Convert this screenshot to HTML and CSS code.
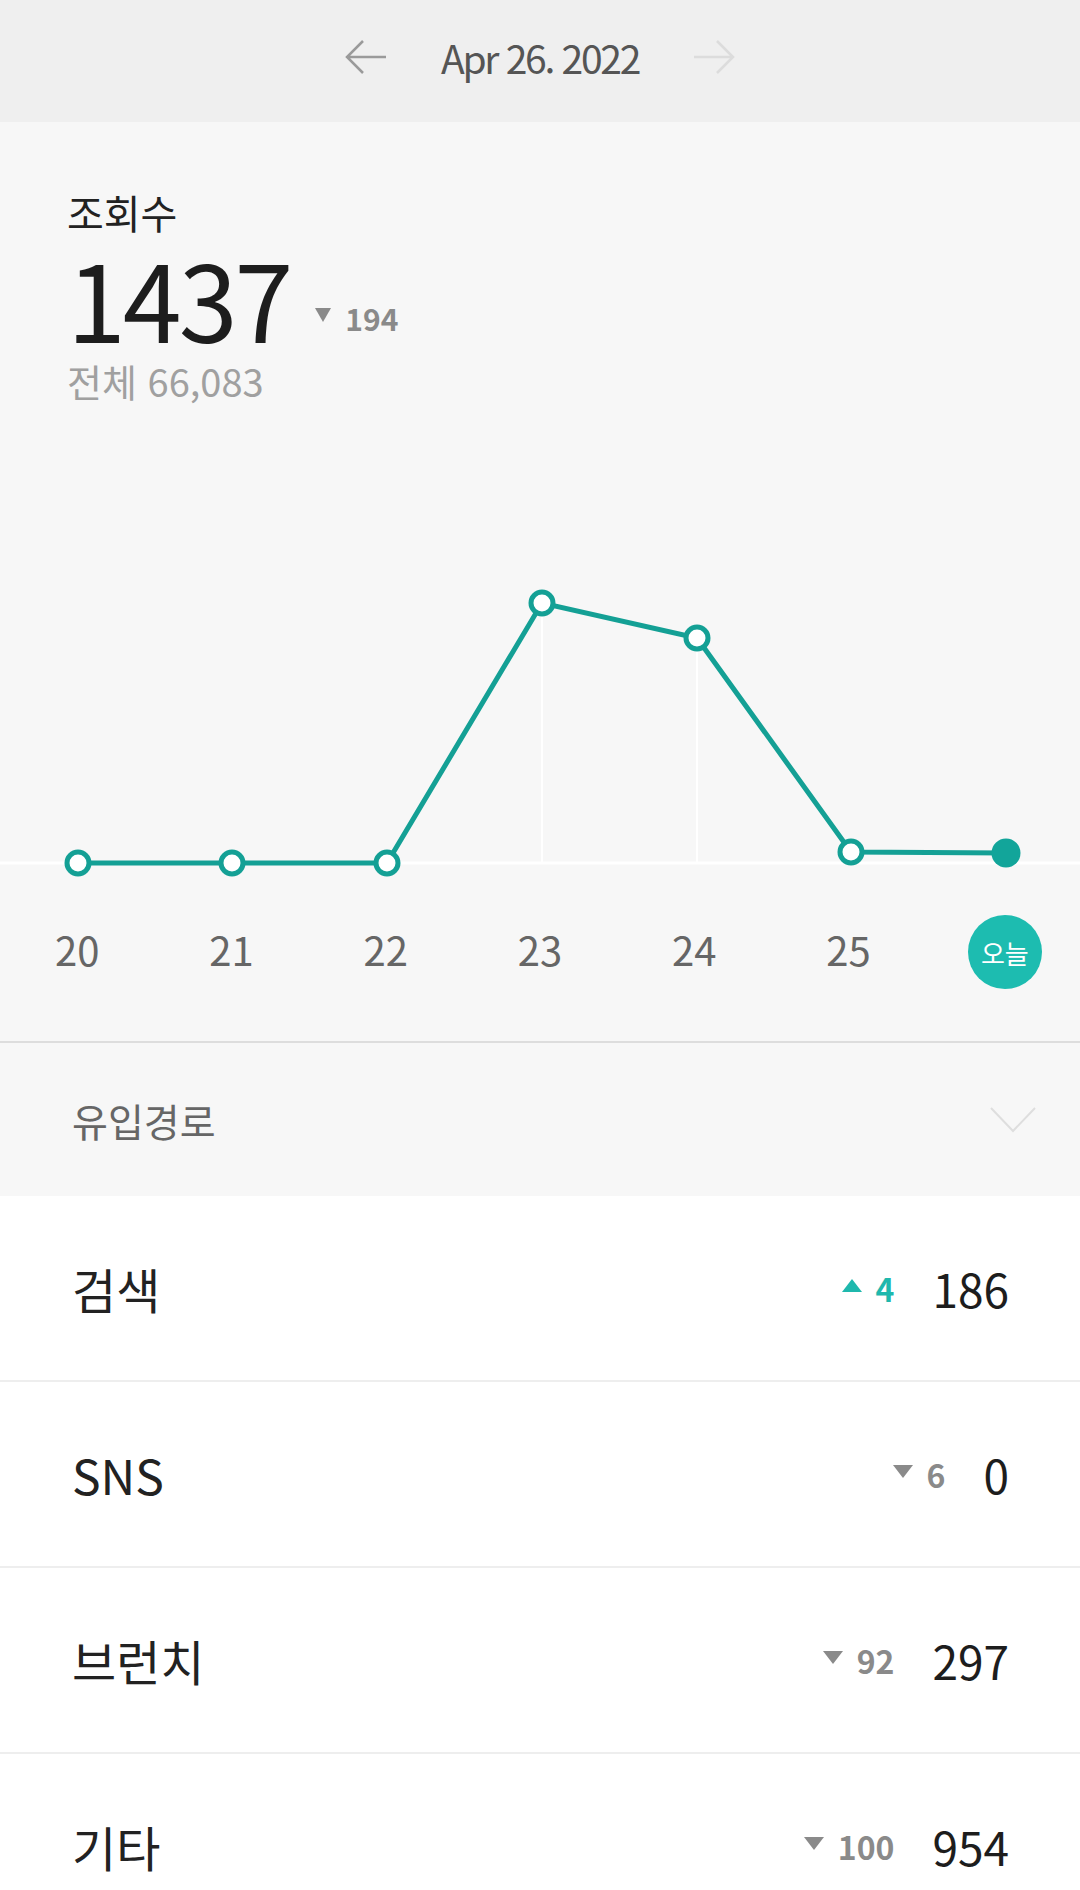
FILE: index.html
```html
<!DOCTYPE html>
<html lang="ko">
<head>
  <meta charset="UTF-8">
  <title>조회수 통계</title>
  <link rel="stylesheet" href="styles.css">
</head>
<body>
  <header class="date-bar">
    <svg class="arrow" width="42" height="34" viewBox="0 0 42 34">
      <path d="M18 1 L2 17 L18 33 M2 17 H41" fill="none" stroke="#9a9a9a" stroke-width="2.5"/>
    </svg>
    <span class="date">Apr 26. 2022</span>
    <svg class="arrow" width="42" height="34" viewBox="0 0 42 34">
      <path d="M24 1 L40 17 L24 33 M40 17 H1" fill="none" stroke="#dcdcdc" stroke-width="2.5"/>
    </svg>
  </header>

  <section class="overview">
    <div class="summary">
      <div class="summary-title">조회수</div>
      <div class="summary-main">
        <span class="summary-count">1437</span>
        <span class="delta delta-big"><i class="tri tri-down"></i>194</span>
      </div>
      <div class="summary-total">전체 66,083</div>
    </div>

    <svg class="chart" width="1080" height="480" viewBox="0 0 1080 480">
      <line x1="0" y1="459" x2="1080" y2="459" stroke="#ffffff" stroke-width="3"/>
      <line x1="542" y1="199" x2="542" y2="459" stroke="#ffffff" stroke-width="2"/>
      <line x1="697" y1="234" x2="697" y2="459" stroke="#ffffff" stroke-width="2"/>
      <polyline points="78,459 232,459 387,459 542,199 697,234 851,448 1006,449" fill="none" stroke="#14a095" stroke-width="5"/>
      <g fill="#ffffff" stroke="#14a095" stroke-width="5">
        <circle cx="78" cy="459" r="11"/>
        <circle cx="232" cy="459" r="11"/>
        <circle cx="387" cy="459" r="11"/>
        <circle cx="542" cy="199" r="11"/>
        <circle cx="697" cy="234" r="11"/>
        <circle cx="851" cy="448" r="11"/>
      </g>
      <circle cx="1006" cy="449" r="14.5" fill="#12a59a"/>
    </svg>

    <div class="chart-labels">
      <span>20</span>
      <span>21</span>
      <span>22</span>
      <span>23</span>
      <span>24</span>
      <span>25</span>
      <span><b class="today">오늘</b></span>
    </div>
  </section>

  <div class="section-head">
    <span>유입경로</span>
    <svg width="46" height="26" viewBox="0 0 46 26">
      <path d="M1 1 L23 24 L45 1" fill="none" stroke="#dedede" stroke-width="2"/>
    </svg>
  </div>

  <ul class="sources">
    <li class="source">
      <span class="source-name">검색</span>
      <span class="source-stat">
        <span class="delta delta-up"><i class="tri tri-up"></i>4</span>
        <span class="source-value">186</span>
      </span>
    </li>
    <li class="source">
      <span class="source-name">SNS</span>
      <span class="source-stat">
        <span class="delta"><i class="tri tri-down"></i>6</span>
        <span class="source-value">0</span>
      </span>
    </li>
    <li class="source">
      <span class="source-name">브런치</span>
      <span class="source-stat">
        <span class="delta"><i class="tri tri-down"></i>92</span>
        <span class="source-value">297</span>
      </span>
    </li>
    <li class="source">
      <span class="source-name">기타</span>
      <span class="source-stat">
        <span class="delta"><i class="tri tri-down"></i>100</span>
        <span class="source-value">954</span>
      </span>
    </li>
  </ul>
</body>
</html>
```

FILE: styles.css
```css
body {
  margin: 0;
  font-family: "Noto Sans CJK KR", "Noto Sans", sans-serif;
  background: #ffffff;
  color: #222222;
}
.date-bar {
  box-sizing: border-box;
  height: 122px;
  padding-bottom: 8px;
  background: #efefef;
  display: flex;
  align-items: center;
  justify-content: center;
  gap: 54px;
}
.date {
  font-size: 39px;
  letter-spacing: -2.3px;
  color: #555555;
  line-height: 1;
}
.overview {
  background: #f7f7f7;
  border-bottom: 2px solid #dddddd;
}
.summary {
  padding: 66px 0 0 67px;
}
.summary-title {
  font-size: 40px;
  line-height: 48px;
  color: #222222;
}
.summary-main {
  margin-top: 5px;
  display: flex;
  align-items: flex-end;
  gap: 25px;
}
.summary-count {
  font-size: 106px;
  line-height: 112px;
  letter-spacing: -3px;
  color: #1d1d1d;
}
.summary-total {
  margin-top: 5px;
  font-size: 38px;
  line-height: 46px;
  color: #a0a0a0;
}
.chart {
  display: block;
}
.chart-labels {
  display: grid;
  grid-template-columns: repeat(7, 1fr);
  padding: 28px 0 55px;
}
.chart-labels span {
  display: flex;
  align-items: center;
  justify-content: center;
  height: 74px;
  font-size: 40px;
  color: #666666;
}
.today {
  width: 74px;
  height: 74px;
  border-radius: 50%;
  background: #1dbcb0;
  color: #ffffff;
  font-size: 26px;
  font-weight: normal;
  display: flex;
  align-items: center;
  justify-content: center;
  margin-left: 4px;
  margin-top: 6px;
}
.section-head {
  height: 153px;
  background: #f7f7f7;
  display: flex;
  align-items: center;
  justify-content: space-between;
  padding: 0 44px 0 72px;
  font-size: 39px;
  color: #666666;
}
.sources {
  list-style: none;
  margin: 0;
  padding: 0;
}
.source {
  height: 184px;
  border-bottom: 2px solid #eeeeee;
  display: flex;
  align-items: center;
  justify-content: space-between;
  padding: 0 71px 0 72px;
}
.source-name {
  font-size: 48px;
  color: #222222;
}
.source-stat {
  display: flex;
  align-items: center;
  gap: 38px;
}
.source-value {
  font-size: 46px;
  color: #1d1d1d;
}
.delta {
  display: flex;
  align-items: center;
  gap: 14px;
  font-size: 32px;
  font-weight: bold;
  color: #8a8a8a;
}
.delta-up {
  color: #1fb8ad;
}
.delta-big {
  font-size: 30px;
  line-height: 1;
  margin-bottom: 20px;
}
.tri {
  width: 0;
  height: 0;
  margin-bottom: 6px;
  border-left: 10px solid transparent;
  border-right: 10px solid transparent;
}
.tri-down {
  border-top: 13px solid #8a8a8a;
}
.tri-up {
  border-bottom: 13px solid #1fb8ad;
}
.delta-big .tri {
  border-left-width: 8px;
  border-right-width: 8px;
  border-top-width: 14px;
}
```
